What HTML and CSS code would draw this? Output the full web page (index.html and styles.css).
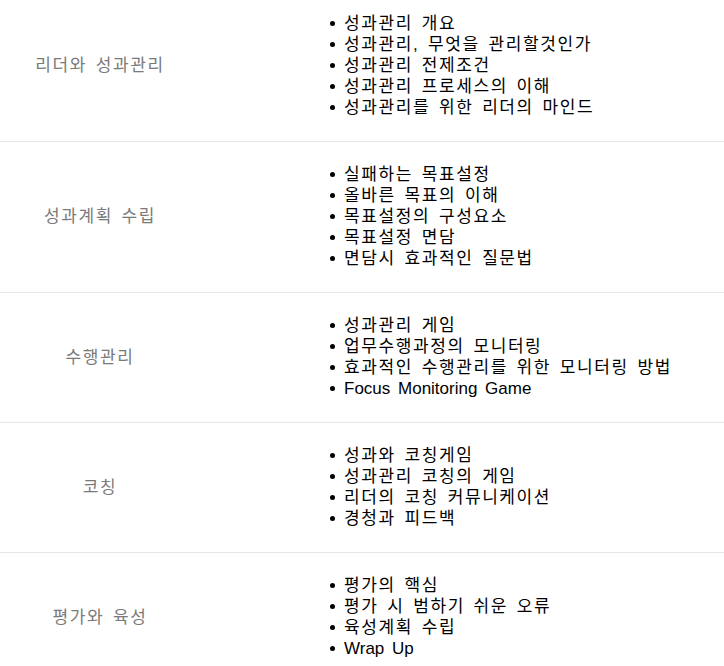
FILE: index.html
```html
<!DOCTYPE html>
<html lang="ko">
<head>
<meta charset="utf-8">
<title>성과관리 과정</title>
<link rel="stylesheet" href="styles.css">
</head>
<body>
<div class="curriculum">
  <div class="row">
    <div class="label">리더와 성과관리</div>
    <ul class="items">
      <li>성과관리 개요</li>
      <li>성과관리, 무엇을 관리할것인가</li>
      <li>성과관리 전제조건</li>
      <li>성과관리 프로세스의 이해</li>
      <li>성과관리를 위한 리더의 마인드</li>
    </ul>
  </div>
  <div class="row">
    <div class="label">성과계획 수립</div>
    <ul class="items">
      <li>실패하는 목표설정</li>
      <li>올바른 목표의 이해</li>
      <li>목표설정의 구성요소</li>
      <li>목표설정 면담</li>
      <li>면담시 효과적인 질문법</li>
    </ul>
  </div>
  <div class="row">
    <div class="label">수행관리</div>
    <ul class="items">
      <li>성과관리 게임</li>
      <li>업무수행과정의 모니터링</li>
      <li>효과적인 수행관리를 위한 모니터링 방법</li>
      <li><span class="en">Focus Monitoring Game</span></li>
    </ul>
  </div>
  <div class="row">
    <div class="label">코칭</div>
    <ul class="items">
      <li>성과와 코칭게임</li>
      <li>성과관리 코칭의 게임</li>
      <li>리더의 코칭 커뮤니케이션</li>
      <li>경청과 피드백</li>
    </ul>
  </div>
  <div class="row">
    <div class="label">평가와 육성</div>
    <ul class="items">
      <li>평가의 핵심</li>
      <li>평가 시 범하기 쉬운 오류</li>
      <li>육성계획 수립</li>
      <li><span class="en">Wrap Up</span></li>
    </ul>
  </div>
</div>
</body>
</html>
```
FILE: styles.css
```css
html, body {
  margin: 0;
  padding: 0;
  background: #ffffff;
}

body {
  font-family: "Liberation Sans", "Noto Sans CJK KR", sans-serif;
  font-size: 17px;
  line-height: 21px;
  color: #000000;
  letter-spacing: 1.6px;
  word-spacing: 2.4px;
  overflow: hidden;
}

.curriculum {
  margin-top: -9px;
}

.row {
  display: grid;
  grid-template-columns: 200px 1fr;
  align-items: center;
  padding: 22px 0 23px;
  border-bottom: 1px solid #e6e6e6;
}

.label {
  text-align: center;
  color: #7a7a7a;
}

.items {
  list-style: none;
  margin: 0;
  padding: 0 0 0 130px;
}

.items li {
  display: flex;
  align-items: center;
}

.items li::before {
  content: "";
  width: 5px;
  height: 5px;
  border-radius: 50%;
  background: #000000;
  margin-right: 9px;
  flex: none;
}

.en {
  letter-spacing: 0;
  word-spacing: 3px;
}
```
